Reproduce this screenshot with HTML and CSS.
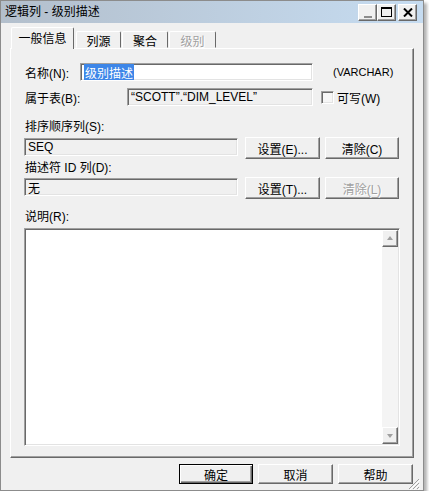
FILE: index.html
```html
<!DOCTYPE html>
<html lang="zh-CN">
<head>
    <meta charset="UTF-8">
    <title>逻辑列 - 级别描述</title>
    <link rel="stylesheet" href="styles.css">
</head>
<body>
    <div class="window">
        <div class="titlebar">
            <span class="title">逻辑列 - 级别描述</span>
            <div class="caption-buttons">
                <span class="cap-btn"><span class="min-glyph"></span></span>
                <span class="cap-btn"><span class="max-glyph"></span></span>
                <span class="cap-btn close">
                    <svg width="10" height="9" viewBox="0 0 10 9"><path d="M1 0.5 L9 8.5 M9 0.5 L1 8.5" stroke="#000" stroke-width="2"/></svg>
                </span>
            </div>
        </div>

        <div class="client">
            <div class="tabs">
                <span class="tab selected">一般信息</span>
                <span class="tab">列源</span>
                <span class="tab">聚合</span>
                <span class="tab disabled">级别</span>
            </div>

            <div class="panel">
                <div class="row row-name">
                    <span class="label name-label">名称(N):</span>
                    <span class="field edit name-field"><span class="sel">级别描述</span></span>
                    <span class="type">(VARCHAR)</span>
                </div>

                <div class="row row-table">
                    <span class="label table-label">属于表(B):</span>
                    <span class="field table-field">“SCOTT”.“DIM_LEVEL”</span>
                    <span class="checkbox"></span>
                    <span class="check-text">可写(W)</span>
                </div>

                <div class="caption caption-sort">排序顺序列(S):</div>
                <div class="row row-pick">
                    <span class="field pick-field">SEQ</span>
                    <button class="btn set-btn">设置(E)...</button>
                    <button class="btn clear-btn">清除(C)</button>
                </div>

                <div class="caption caption-desc">描述符 ID 列(D):</div>
                <div class="row row-pick">
                    <span class="field pick-field">无</span>
                    <button class="btn set-btn">设置(T)...</button>
                    <button class="btn clear-btn disabled">清除(L)</button>
                </div>

                <div class="caption caption-note">说明(R):</div>
                <div class="memo">
                    <div class="memo-text"></div>
                    <div class="scrollbar">
                        <span class="arrow up"></span>
                        <span class="track"></span>
                        <span class="arrow down"></span>
                    </div>
                </div>
            </div>

            <div class="footer">
                <button class="btn default">确定</button>
                <button class="btn">取消</button>
                <button class="btn">帮助</button>
            </div>
        </div>

        <div class="grip">
            <svg width="12" height="12" viewBox="0 0 12 12">
                <path d="M11 1 L1 11 M11 5 L5 11 M11 9 L9 11" stroke="#a0a0a0" stroke-width="1"/>
                <path d="M12 2 L2 12 M12 6 L6 12 M12 10 L10 12" stroke="#fff" stroke-width="1"/>
            </svg>
        </div>
    </div>
</body>
</html>
```

FILE: styles.css
```css
body {
    margin: 0;
    padding: 0;
    background-color: #fff;
    font-family: "Liberation Sans", "Noto Sans CJK SC", sans-serif;
    font-size: 12px;
    color: #000;
}
.window {
    position: relative;
    box-sizing: border-box;
    width: 424px;
    height: 491px;
    background-color: #f0f0f0;
    border: 1px solid #8c8c8c;
    box-shadow: 3px 3px 3px rgba(0, 0, 0, 0.3);
}
.titlebar {
    display: flex;
    align-items: center;
    height: 22px;
    padding: 0 6px 0 4px;
    background: linear-gradient(to right, #b3bfcc, #c6dcf1);
}
.title {
    line-height: 22px;
}
.caption-buttons {
    display: flex;
    margin-left: auto;
}
.cap-btn {
    box-sizing: border-box;
    display: flex;
    align-items: center;
    justify-content: center;
    width: 19px;
    height: 17px;
    background-color: #f0f0f0;
    border: 1px solid;
    border-color: #fff #696969 #696969 #fff;
    box-shadow: inset -1px -1px #a0a0a0;
}
.cap-btn.close {
    margin-left: 2px;
}
.min-glyph {
    width: 8px;
    height: 2px;
    margin-top: 9px;
    background-color: #8c8c8c;
}
.max-glyph {
    box-sizing: border-box;
    width: 11px;
    height: 10px;
    border: 1px solid #000;
    border-top-width: 2px;
}
.client {
    padding: 4px 9px 0 9px;
}
.tabs {
    display: flex;
    align-items: flex-end;
    height: 21px;
    position: relative;
    z-index: 1;
}
.tab {
    box-sizing: border-box;
    display: flex;
    align-items: center;
    justify-content: center;
    height: 17px;
    margin-left: 1px;
    padding-top: 1px;
    border: 1px solid;
    border-color: #fff #696969 transparent #fff;
    border-radius: 2px 2px 0 0;
}
.tab:nth-child(2) { width: 45px; margin-left: 2px; }
.tab:nth-child(3) { width: 46px; }
.tab:nth-child(4) { width: 47px; }
.tab.selected {
    width: 63px;
    height: 22px;
    margin: 0 0 -1px 1px;
    padding-bottom: 3px;
    background-color: #f0f0f0;
    border-bottom: none;
}
.tab.disabled,
.btn.disabled {
    color: #a0a0a0;
    text-shadow: 1px 1px #fff;
}
.panel {
    box-sizing: border-box;
    height: 410px;
    padding: 0 0 0 13px;
    border: 1px solid;
    border-color: #fff #696969 #696969 #fff;
    box-shadow: inset -1px -1px #a0a0a0;
}
.row {
    display: flex;
    align-items: center;
}
.row-name {
    margin-top: 14px;
    height: 18px;
}
.row-table {
    margin-top: 7px;
    height: 18px;
}
.label {
    padding-left: 1px;
}
.name-label { width: 55px; }
.table-label { width: 102px; }
.field {
    box-sizing: border-box;
    display: flex;
    align-items: center;
    height: 18px;
    padding-left: 3px;
    white-space: nowrap;
    overflow: hidden;
    border: 1px solid;
    border-color: #a0a0a0 #fff #fff #a0a0a0;
    box-shadow: inset 1px 1px #696969, inset -1px -1px #e3e3e3;
}
.field.edit {
    background-color: #fff;
}
.name-field { width: 233px; }
.table-field { width: 186px; }
.sel {
    padding: 0 1px;
    background-color: #3d86e8;
    color: #fff;
}
.type {
    margin-left: 20px;
    font-size: 11px;
}
.checkbox {
    box-sizing: border-box;
    width: 13px;
    height: 13px;
    margin-left: 8px;
    background-color: #f6f6f6;
    border: 1px solid;
    border-color: #a0a0a0 #fff #fff #a0a0a0;
    box-shadow: inset 1px 1px #696969, inset -1px -1px #e3e3e3;
}
.check-text {
    margin-left: 3px;
}
.caption {
    line-height: 14px;
    padding-left: 1px;
}
.caption-sort { margin-top: 14px; }
.caption-desc { margin-top: 2px; }
.caption-note { margin-top: 11px; }
.row-pick {
    align-items: flex-start;
    height: 22px;
    margin-top: 2px;
}
.caption-sort + .row-pick { margin-top: 3px; }
.pick-field {
    width: 214px;
    margin-top: 1px;
}
.btn {
    box-sizing: border-box;
    height: 22px;
    padding: 0;
    font-family: inherit;
    font-size: 12px;
    color: #000;
    background-color: #f0f0f0;
    border: 1px solid;
    border-color: #fff #696969 #696969 #fff;
    box-shadow: inset -1px -1px #a0a0a0;
}
.set-btn {
    width: 75px;
    margin-left: 7px;
}
.clear-btn {
    width: 74px;
    margin-left: 5px;
}
.memo {
    display: flex;
    box-sizing: border-box;
    width: 376px;
    height: 218px;
    margin-top: 4px;
    background-color: #fff;
    border: 1px solid;
    border-color: #a0a0a0 #fff #fff #a0a0a0;
    box-shadow: inset 1px 1px #696969, inset -1px -1px #e3e3e3;
}
.memo-text {
    flex: 1;
}
.scrollbar {
    display: flex;
    flex-direction: column;
    width: 16px;
    margin: 1px 1px 1px 0;
    background-color: #f4f4f4;
}
.track {
    flex: 1;
}
.arrow {
    box-sizing: border-box;
    position: relative;
    height: 17px;
    background-color: #f0f0f0;
    border: 1px solid;
    border-color: #fff #696969 #696969 #fff;
    box-shadow: inset -1px -1px #a0a0a0;
}
.arrow::after {
    content: "";
    position: absolute;
    left: 4px;
    width: 0;
    height: 0;
    border-left: 3px solid transparent;
    border-right: 3px solid transparent;
}
.arrow.up::after {
    top: 5px;
    border-bottom: 4px solid #a0a0a0;
}
.arrow.down::after {
    top: 6px;
    border-top: 4px solid #a0a0a0;
}
.footer {
    display: flex;
    justify-content: flex-end;
    margin-top: 6px;
    padding-right: 1px;
}
.footer .btn {
    width: 75px;
    height: 20px;
    margin-left: 5px;
}
.footer .btn.default {
    width: 74px;
    border: 1px solid #000;
    box-shadow: inset 1px 1px #fff, inset -1px -1px #696969, inset -2px -2px #a0a0a0;
}
.grip {
    position: absolute;
    right: 3px;
    bottom: 0;
    width: 12px;
    height: 12px;
}
```
